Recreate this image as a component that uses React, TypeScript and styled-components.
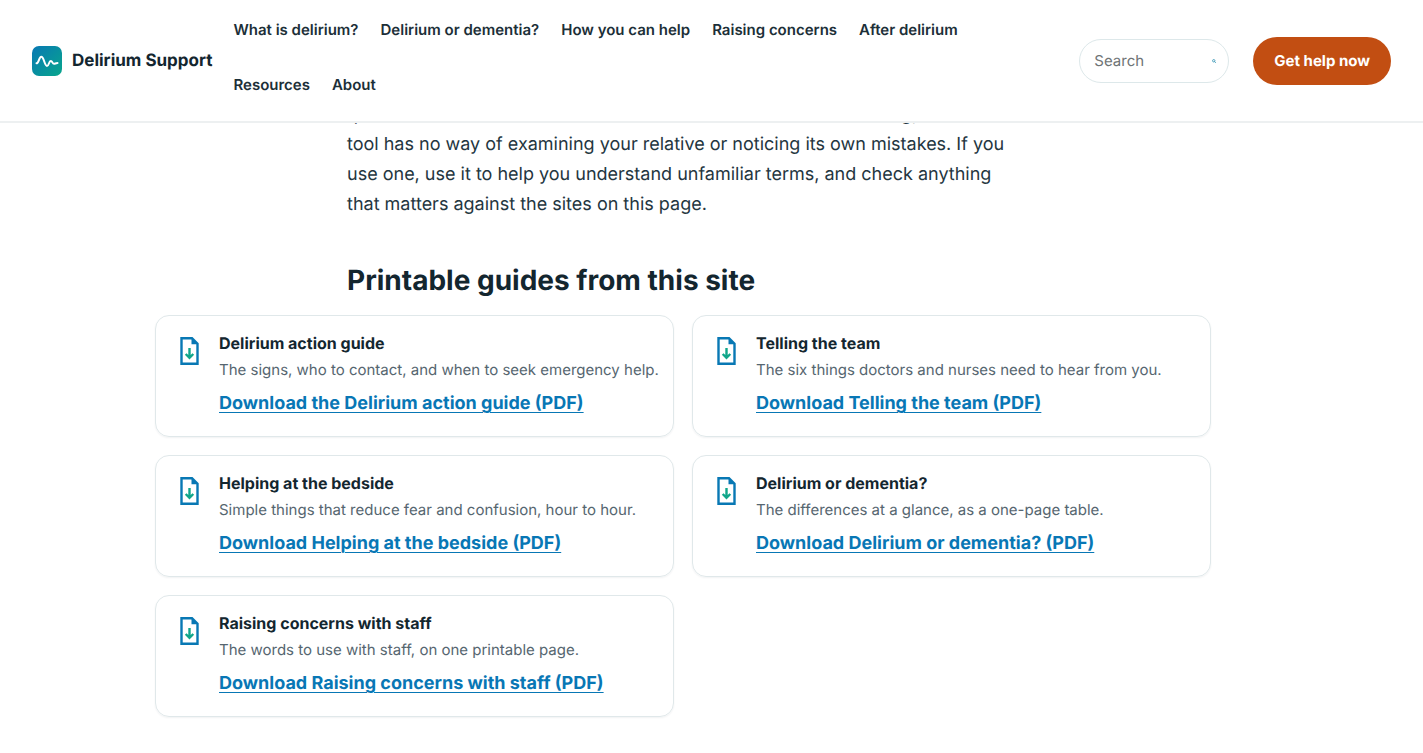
import React from "react";
import styled, { createGlobalStyle } from "styled-components";

const GlobalStyle = createGlobalStyle`
  *, *::before, *::after { box-sizing: border-box; }
  body {
    margin: 0;
    background: #fff;
    color: #13262f;
    font-family: Inter, "Liberation Sans", sans-serif;
    font-size: 18px;
    line-height: 30px;
    text-rendering: geometricPrecision;
  }
`;

const Header = styled.header`
  position: fixed;
  inset: 0 0 auto;
  z-index: 1;
  display: flex;
  align-items: center;
  padding: 7px 32px 6px;
  background: #fff;
  border-bottom: 2px solid #edf0f1;
`;

const Brand = styled.a`
  display: flex;
  align-items: center;
  gap: 10px;
  color: inherit;
  font-size: 17px;
  font-weight: 700;
  text-decoration: none;
  white-space: nowrap;
`;

const Nav = styled.nav`
  flex: 1;
  margin: 0 24px 0 21px;
  padding-bottom: 8px;
`;

const NavList = styled.ul`
  display: flex;
  flex-wrap: wrap;
  gap: 10px 22px;
  margin: 0;
  padding: 0;
  list-style: none;
`;

const NavLink = styled.a`
  display: block;
  color: #1c2f38;
  font-size: 15px;
  font-weight: 600;
  line-height: 45px;
  text-decoration: none;
`;

const SearchForm = styled.form`
  display: flex;
  align-items: center;
  flex: none;
  width: 150px;
  height: 44px;
  margin-right: 24px;
  padding: 0 12px 0 14px;
  border: 1px solid #dde8ea;
  border-radius: 22px;
`;

const SearchInput = styled.input`
  flex: 1;
  min-width: 0;
  padding: 0;
  border: 0;
  outline: 0;
  background: none;
  color: inherit;
  font: inherit;
  font-size: 15px;
  text-rendering: inherit;
  &::placeholder { color: #6f7476; opacity: 1; }
`;

const SearchButton = styled.button`
  display: flex;
  padding: 0;
  border: 0;
  background: none;
`;

const HelpButton = styled.button`
  flex: none;
  height: 48px;
  padding: 0 21px;
  border: 0;
  border-radius: 24px;
  background: #c24e12;
  color: #fff;
  font: inherit;
  font-size: 15px;
  font-weight: 700;
  text-rendering: inherit;
`;

const Page = styled.div`
  padding-right: 57px;
`;

const Main = styled.main`
  max-width: 1056px;
  margin: 0 auto;
  padding-top: 100px;
`;

const Prose = styled.div`
  max-width: 672px;
  margin: 0 auto;
`;

const Paragraph = styled.p`
  margin: 0;
  color: #24363f;
`;

const SectionTitle = styled.h2`
  margin: 43px 0 18px;
  font-size: 28px;
  font-weight: 700;
  line-height: 34px;
`;

const Guides = styled.ul`
  display: grid;
  grid-template-columns: 1fr 1fr;
  gap: 18px;
  margin: 0;
  padding: 0 0 36px;
  list-style: none;
`;

const Card = styled.li`
  display: flex;
  gap: 14px;
  min-height: 122px;
  padding: 14px 8px 14px 19px;
  border: 1px solid #e0e8ea;
  border-radius: 14px;
  box-shadow: 0 1px 2px rgba(19, 38, 47, 0.06);
`;

const CardIcon = styled.svg`
  flex: none;
  margin-top: 6px;
`;

const CardTitle = styled.h3`
  margin: 0;
  font-size: 16px;
  font-weight: 700;
  line-height: 27px;
`;

const CardText = styled.p`
  margin: 0 0 7px;
  color: #566670;
  font-size: 15px;
  line-height: 25px;
`;

const Download = styled.a`
  color: #0877b5;
  font-weight: 700;
  text-decoration-thickness: 1px;
  text-underline-offset: 3px;
`;

const links = [
  "What is delirium?",
  "Delirium or dementia?",
  "How you can help",
  "Raising concerns",
  "After delirium",
  "Resources",
  "About",
];

const guides = [
  { title: "Delirium action guide", text: "The signs, who to contact, and when to seek emergency help.", link: "Download the Delirium action guide (PDF)" },
  { title: "Telling the team", text: "The six things doctors and nurses need to hear from you.", link: "Download Telling the team (PDF)" },
  { title: "Helping at the bedside", text: "Simple things that reduce fear and confusion, hour to hour.", link: "Download Helping at the bedside (PDF)" },
  { title: "Delirium or dementia?", text: "The differences at a glance, as a one-page table.", link: "Download Delirium or dementia? (PDF)" },
  { title: "Raising concerns with staff", text: "The words to use with staff, on one printable page.", link: "Download Raising concerns with staff (PDF)" },
];

const Logo = () => (
  <svg width="30" height="30" viewBox="0 0 30 30" aria-hidden="true">
    <defs>
      <linearGradient id="brand" x1="0" y1="0" x2="1" y2="1">
        <stop offset="0" stopColor="#0878b4" />
        <stop offset="1" stopColor="#08a68c" />
      </linearGradient>
    </defs>
    <rect width="30" height="30" rx="7" fill="url(#brand)" />
    <path d="M4.500 17.300C6.800 17.300 7 10.800 9.300 10.800C12 10.800 12.500 20 15 20C17 20 16.800 15 18.800 15C20.500 15 20.300 17.800 22 17.800C23.300 17.800 23.500 17 25.500 17" fill="none" stroke="#fff" strokeWidth="2" strokeLinecap="round" />
  </svg>
);

const FileIcon = () => (
  <CardIcon width="30" height="30" viewBox="0 0 30 30" aria-hidden="true">
    <path d="M6.500 2.200h10.500l5.500 5.500v20.100h-16z" fill="none" stroke="#0878b4" strokeWidth="2.400" />
    <path d="M16.500 1.500v6.700h6.500z" fill="#0878b4" />
    <path d="M14.500 12v9.500M10.700 18l3.800 3.800 3.800-3.800" fill="none" stroke="#10a68a" strokeWidth="2.400" />
  </CardIcon>
);

export default function App() {
  return (
    <>
      <GlobalStyle />
      <Header>
        <Brand href="#home"><Logo />Delirium Support</Brand>
        <Nav aria-label="Main">
          <NavList>
            {links.map((label) => (
              <li key={label}><NavLink href="#page">{label}</NavLink></li>
            ))}
          </NavList>
        </Nav>
        <SearchForm role="search">
          <SearchInput type="search" placeholder="Search" aria-label="Search" />
          <SearchButton type="submit" aria-label="Submit search">
            <svg width="4" height="4" viewBox="0 0 5 5" fill="none" stroke="#2b8fb0" strokeWidth="1" aria-hidden="true">
              <circle cx="2.200" cy="2.200" r="1.500" />
              <path d="M3.200 3.200L4.800 4.800" />
            </svg>
          </SearchButton>
        </SearchForm>
        <HelpButton type="button">Get help now</HelpButton>
      </Header>
      <Page>
        <Main>
          <Prose>
            <Paragraph>
              questions to ask the ward. But the answers can however be wrong, and the<br />
              tool has no way of examining your relative or noticing its own mistakes. If you
              use one, use it to help you understand unfamiliar terms, and check anything
              that matters against the sites on this page.
            </Paragraph>
            <SectionTitle>Printable guides from this site</SectionTitle>
          </Prose>
          <Guides>
            {guides.map((guide) => (
              <Card key={guide.title}>
                <FileIcon />
                <div>
                  <CardTitle>{guide.title}</CardTitle>
                  <CardText>{guide.text}</CardText>
                  <Download href="#pdf">{guide.link}</Download>
                </div>
              </Card>
            ))}
          </Guides>
        </Main>
      </Page>
    </>
  );
}
